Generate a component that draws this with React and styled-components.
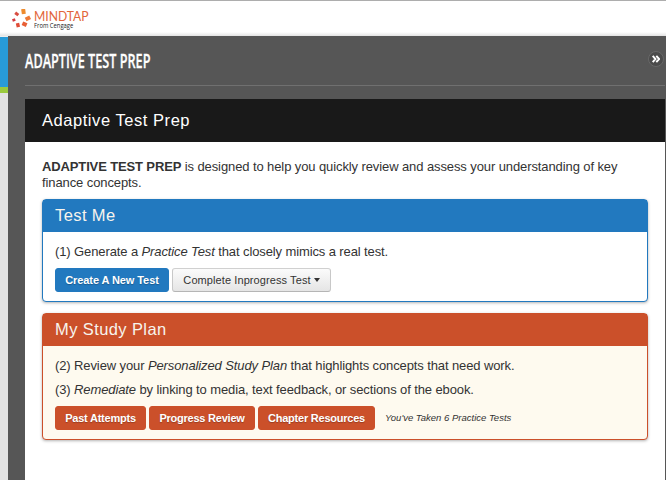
import React from "react";
import styled, { createGlobalStyle } from "styled-components";

const GlobalStyle = createGlobalStyle`
  * {
    box-sizing: border-box;
  }
  body {
    margin: 0;
    overflow: hidden;
    background-color: #565656;
    color: #333;
    font-family: "Liberation Sans", Arial, sans-serif;
  }
`;

const Page = styled.div`
  display: flex;
  flex-direction: column;
  width: 666px;
  height: 480px;
`;

const TopBar = styled.header`
  display: flex;
  flex-shrink: 0;
  height: 36px;
  padding: 8px 0 0 12px;
  border-top: 1px solid #adadad;
  background: linear-gradient(#fff 31px, #e3e3e3);
`;

const BrandText = styled.div`
  margin: 0 0 0 3px;
  transform: scaleX(0.9);
  transform-origin: left;
`;

const BrandName = styled.div`
  height: 13px;
  color: #e2653a;
  font-family: Lato, sans-serif;
  font-size: 13.5px;
  line-height: 14px;
`;

const BrandSub = styled.div`
  height: 7px;
  color: #222;
  font-family: "Open Sans", sans-serif;
  font-size: 6.5px;
  line-height: 7px;
`;

const Main = styled.div`
  display: flex;
  flex: 1;
  min-height: 0;
`;

const Rail = styled.div`
  width: 8px;
  border-top: 1px solid #eee;
  background: linear-gradient(#289bd8 50px, #9bca3e 50px, #9bca3e 56px, #e2e2e2 56px);
`;

const Content = styled.div`
  display: flex;
  flex: 1;
  flex-direction: column;
  padding: 0 1px 0 17px;
  background-color: #565656;
`;

const TitleRow = styled.div`
  display: flex;
  justify-content: space-between;
  height: 50px;
  margin-bottom: 13px;
  border-bottom: 1px solid #707070;
`;

const Title = styled.h1`
  margin: 11px 0 0;
  color: #fff;
  font-family: "Open Sans", sans-serif;
  font-size: 20.5px;
  font-weight: 600;
  line-height: 26px;
  white-space: nowrap;
  transform: scaleX(0.618);
  transform-origin: left;
  -webkit-text-stroke: 0.3px #fff;
`;

const Collapse = styled.button`
  display: flex;
  align-items: center;
  justify-content: center;
  width: 16px;
  height: 16px;
  margin: 15px 1px 0 0;
  padding: 0;
  border: 1px solid #686868;
  border-radius: 50%;
  background-color: #4b4b4b;
`;

const Sheet = styled.section`
  flex: 1;
  background-color: #fff;
`;

const SheetHeader = styled.h2`
  height: 43px;
  margin: 0;
  padding-left: 17px;
  background-color: #191919;
  color: #fff;
  font-size: 16.5px;
  font-weight: 400;
  line-height: 43px;
  letter-spacing: 0.55px;
`;

const SheetBody = styled.div`
  padding: 17px 17px 0;
`;

const Intro = styled.p`
  margin: 0 0 8px;
  font-size: 13px;
  line-height: 16px;
  letter-spacing: -0.1px;
  strong {
    letter-spacing: -0.13px;
  }
`;

const Panel = styled.section`
  height: ${(props) => props.$height}px;
  margin-bottom: 11px;
  border: 1px solid ${(props) => props.$color};
  border-radius: 4px;
  background-color: ${(props) => props.$fill};
  box-shadow: 0 1px 3px rgba(0, 0, 0, 0.3);
`;

const PanelTitle = styled.h3`
  height: 32px;
  margin: 0;
  padding-left: 12px;
  background-color: ${(props) => props.$color};
  color: #f7f4ed;
  font-size: 16.5px;
  font-weight: 400;
  line-height: 31px;
  letter-spacing: 0.4px;
`;

const PanelBody = styled.div`
  padding: 8px 12px 0;
`;

const Step = styled.p`
  margin: 0;
  font-size: 13px;
  line-height: 24px;
  letter-spacing: -0.11px;
`;

const Actions = styled.div`
  display: flex;
  align-items: center;
  gap: 3px;
  margin-top: 4px;
`;

const Button = styled.button`
  width: ${(props) => props.$width}px;
  height: 24px;
  padding: 0;
  border: 1px solid ${(props) => props.$color};
  border-radius: 3px;
  background-color: ${(props) => props.$color};
  color: #fff;
  font-family: inherit;
  font-size: 11px;
  font-weight: 700;
  line-height: 22px;
  letter-spacing: ${(props) => props.$spacing || -0.23}px;
  white-space: nowrap;
  text-shadow: 0 1px 1px rgba(0, 0, 0, 0.25);
`;

const DropdownButton = styled(Button)`
  display: flex;
  align-items: center;
  justify-content: center;
  gap: 3px;
  border-color: #d0d0d0 #c8c8c8 #b5b5b5;
  background: linear-gradient(#fbfbfb, #e5e5e5);
  color: #333;
  font-weight: 400;
  letter-spacing: 0.09px;
  text-shadow: none;
`;

const Caret = styled.span`
  border: 3.5px solid transparent;
  border-top: 4px solid #333;
  border-bottom: 0;
`;

const Note = styled.em`
  margin: -1px 0 0 7px;
  font-size: 9.5px;
  white-space: nowrap;
`;

const BLUE = "#2279bf";
const ORANGE = "#cb502a";

const Logo = () => (
  <svg width="19" height="19" viewBox="0 0 19 19">
    <rect x="9.5" y="0" width="4" height="5" fill="#ee8b2d" transform="rotate(-8 11 2.5)" />
    <rect x="2.8" y="3.6" width="4" height="3" fill="#d84c40" transform="rotate(38 5 5)" />
    <rect x="0.4" y="9.6" width="3" height="2.6" fill="#d33b40" transform="rotate(-20 2 11)" />
    <rect x="4.2" y="14" width="3.4" height="4.2" fill="#e04c37" transform="rotate(-12 6 16)" />
    <rect x="10.3" y="13.2" width="4.6" height="4" fill="#e85f35" transform="rotate(24 12.5 15)" />
    <rect x="13.2" y="7.3" width="5" height="4" fill="#ee7936" transform="rotate(-26 16 9)" />
  </svg>
);

const App = () => {
  return (
    <Page>
      <GlobalStyle />
      <TopBar>
        <Logo />
        <BrandText>
          <BrandName>MINDTAP</BrandName>
          <BrandSub>From Cengage</BrandSub>
        </BrandText>
      </TopBar>
      <Main>
        <Rail />
        <Content>
          <TitleRow>
            <Title>ADAPTIVE TEST PREP</Title>
            <Collapse aria-label="Collapse">
              <svg width="8" height="8" viewBox="0 0 8 8" fill="none" stroke="#fff" strokeWidth="1.9">
                <path d="M0.7 0.8 3.5 4 0.7 7.2M4.3 0.8 7.1 4 4.3 7.2" />
              </svg>
            </Collapse>
          </TitleRow>
          <Sheet>
            <SheetHeader>Adaptive Test Prep</SheetHeader>
            <SheetBody>
              <Intro>
                <strong>ADAPTIVE TEST PREP</strong> is designed to help you quickly review and
                assess your understanding of key
                <br />
                finance concepts.
              </Intro>
              <Panel $color={BLUE} $fill="#fff" $height={103}>
                <PanelTitle $color={BLUE}>Test Me</PanelTitle>
                <PanelBody>
                  <Step>
                    (1) Generate a <em>Practice Test</em> that closely mimics a real test.
                  </Step>
                  <Actions>
                    <Button $color={BLUE} $width={114} $spacing={-0.08}>Create A New Test</Button>
                    <DropdownButton $width={159}>
                      Complete Inprogress Test
                      <Caret />
                    </DropdownButton>
                  </Actions>
                </PanelBody>
              </Panel>
              <Panel $color={ORANGE} $fill="#fefaef" $height={127}>
                <PanelTitle $color={ORANGE}>My Study Plan</PanelTitle>
                <PanelBody>
                  <Step>
                    (2) Review your <em>Personalized Study Plan</em> that highlights concepts that
                    need work.
                  </Step>
                  <Step>
                    (3) <em>Remediate</em> by linking to media, text feedback, or sections of the
                    ebook.
                  </Step>
                  <Actions>
                    <Button $color={ORANGE} $width={91}>Past Attempts</Button>
                    <Button $color={ORANGE} $width={106}>Progress Review</Button>
                    <Button $color={ORANGE} $width={117}>Chapter Resources</Button>
                    <Note>You've Taken 6 Practice Tests</Note>
                  </Actions>
                </PanelBody>
              </Panel>
            </SheetBody>
          </Sheet>
        </Content>
      </Main>
    </Page>
  );
};

export default App;
